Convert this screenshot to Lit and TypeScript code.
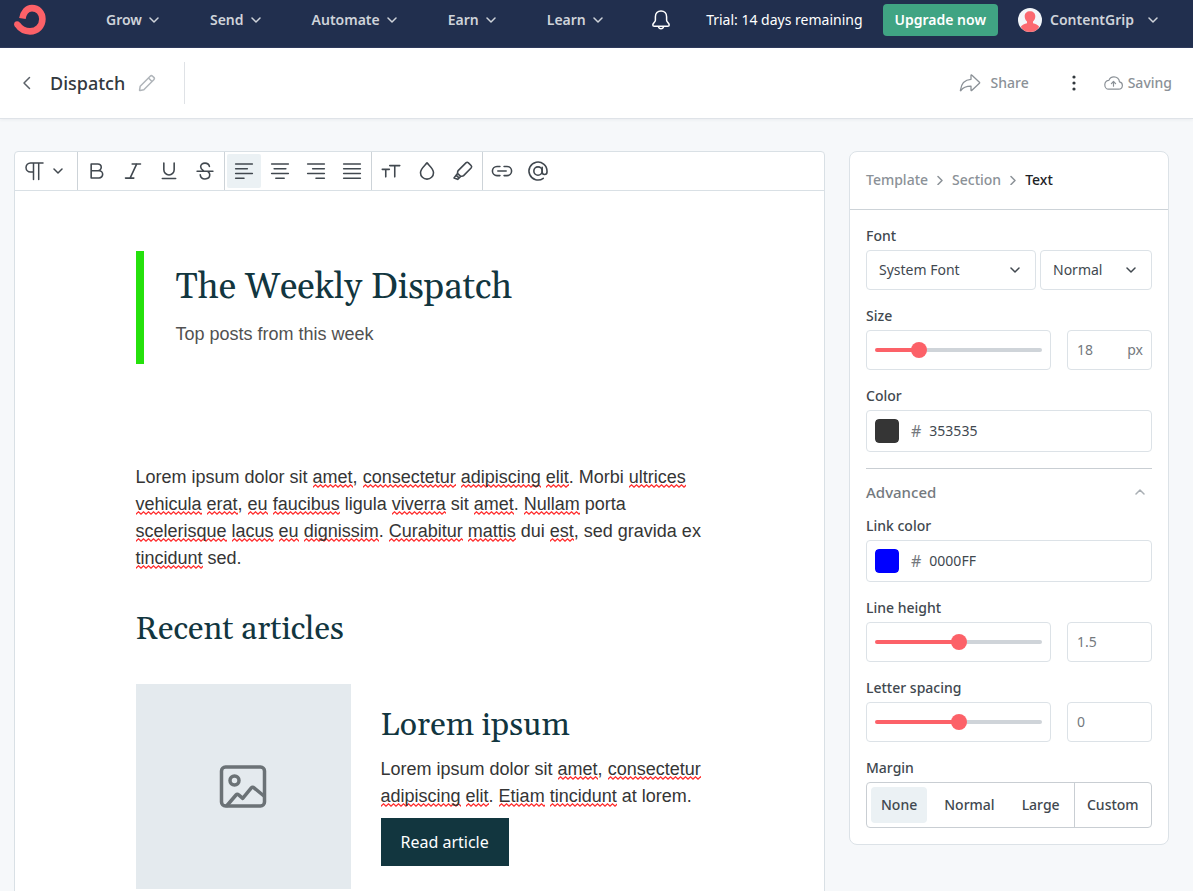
import { LitElement, html, css, svg, nothing } from "lit";
import { customElement, property, state } from "lit/decorators.js";
import { classMap } from "lit/directives/class-map.js";

const base = css`
  *,
  *::before,
  *::after {
    box-sizing: border-box;
  }
  button,
  input,
  select {
    font: inherit;
    color: inherit;
    margin: 0;
    padding: 0;
    border: 0;
    background: none;
  }
  button {
    cursor: pointer;
  }
  a {
    color: inherit;
    text-decoration: none;
  }
  svg {
    display: block;
    flex: none;
    fill: none;
    stroke: currentColor;
    stroke-linecap: round;
    stroke-linejoin: round;
  }
`;

const chevronDown = html`<svg width="10" height="6" viewBox="0 0 10 6" stroke-width="1.5" aria-hidden="true">
  <path d="M1 1l4 4 4-4" />
</svg>`;

@customElement("top-nav")
export class TopNav extends LitElement {
  static styles = [
    base,
    css`
      :host {
        display: block;
        flex: none;
      }
      .bar {
        display: flex;
        align-items: center;
        height: 48px;
        padding: 0 35px 8px 14px;
        background: #212f4e;
        border-bottom: 1px solid #2f3b5d;
        color: #fff;
        white-space: nowrap;
      }
      .logo {
        margin-right: 60px;
      }
      .menu {
        display: flex;
        gap: 51px;
      }
      .item {
        display: flex;
        align-items: center;
        gap: 7px;
        font-weight: 600;
        line-height: 20px;
        color: #cfd3da;
      }
      .side {
        display: flex;
        align-items: center;
        gap: 20px;
        margin-left: auto;
      }
      .bell {
        margin-right: 15px;
      }
      .upgrade {
        height: 32px;
        padding: 0 12px;
        border-radius: 4px;
        background: #40a483;
        font-weight: 600;
      }
      .account {
        display: flex;
        align-items: center;
        gap: 8px;
        font-weight: 600;
        color: #cfd3da;
      }
      .account .caret {
        margin-left: 6px;
      }
    `,
  ];

  render() {
    return html`
      <header class="bar">
        <a class="logo" href="#" aria-label="Home">
          <svg width="32" height="32" viewBox="0 0 32 32">
            <path
              d="M8.4 14.6C9.4 8.3 13 4.1 18 4.1c6 0 10.4 4.700 10.400 11 0 7-5.400 12.300-12.400 12.300-5.700 0-9.600-2.500-12.600-6.900"
              stroke="#fc6168"
              stroke-width="6.600"
              stroke-linecap="butt"
            />
            <circle cx="3.100" cy="20.200" r="3" fill="#fc6168" stroke="none" />
          </svg>
        </a>
        <nav class="menu">
          ${["Grow", "Send", "Automate", "Earn", "Learn"].map(
            (name) => html`<button class="item" type="button">${name} ${chevronDown}</button>`
          )}
        </nav>
        <div class="side">
          <button class="bell" type="button" aria-label="Notifications">
            <svg width="20" height="20" viewBox="0 0 20 20" stroke-width="1.5">
              <path
                d="M10 .9c-3.400 0-5.600 2.500-5.600 5.800v3.600c0 1.600-2.600 2.800-2.600 4.600 0 .9.700 1.300 1.500 1.300h13.400c.8 0 1.500-.4 1.500-1.300 0-1.800-2.600-3-2.600-4.600V6.700C15.600 3.400 13.400.9 10 .9z"
              />
              <path d="M7.600 17.200a2.500 2.200 0 0 0 4.800 0" />
            </svg>
          </button>
          <span>Trial: 14 days remaining</span>
          <button class="upgrade" type="button">Upgrade now</button>
          <button class="account" type="button">
            <svg width="24" height="24" viewBox="0 0 24 24" stroke="none">
              <clipPath id="face"><circle cx="12" cy="12" r="12" /></clipPath>
              <circle cx="12" cy="12" r="12" fill="#f3f6f9" stroke="none" />
              <g clip-path="url(#face)" fill="#fb6970" stroke="none">
                <path
                  d="M12 3.200c3.200 0 5.300 2 5.300 5 0 2.300-.9 4.200-2.300 5.400v1.600c2.500.7 5 1.500 6.200 3.600L17 25H7l-4.200-6.200c1.200-2.100 3.700-2.900 6.200-3.600v-1.600C7.600 12.400 6.700 10.500 6.700 8.200c0-3 2.100-5 5.300-5z"
                />
              </g>
            </svg>
            ContentGrip
            <span class="caret">${chevronDown}</span>
          </button>
        </div>
      </header>
    `;
  }
}

@customElement("title-bar")
export class TitleBar extends LitElement {
  static styles = [
    base,
    css`
      :host {
        display: block;
        flex: none;
        position: relative;
      }
      .bar {
        display: flex;
        align-items: center;
        height: 71px;
        padding: 0 21px 0 22px;
        background: #fff;
        border-bottom: 1px solid #dfe3e8;
        box-shadow: 0 1px 3px rgba(40, 50, 70, 0.06);
        font-weight: 500;
        color: #8b9197;
        white-space: nowrap;
      }
      .back {
        color: #5a6067;
      }
      .name {
        margin: 0 13px 0 18px;
        font-size: 18px;
        font-weight: 500;
        line-height: 24px;
        color: #33393e;
      }
      .edit {
        height: 42px;
        padding-right: 28px;
        border-right: 1px solid #dfe2e6;
        color: #b0b5ba;
      }
      .actions {
        display: flex;
        align-items: center;
        margin-left: auto;
      }
      .share {
        display: flex;
        align-items: center;
        gap: 10px;
      }
      .more {
        padding: 0 23px 0 38px;
        color: #33393e;
      }
      .more svg {
        fill: currentColor;
        stroke: none;
      }
      .status {
        display: flex;
        align-items: center;
        gap: 5px;
      }
    `,
  ];

  render() {
    return html`
      <div class="bar">
        <a class="back" href="#" aria-label="Back">
          <svg width="10" height="14" viewBox="0 0 10 14" stroke-width="1.500"><path d="M7.500 1.500L2 7l5.500 5.500" /></svg>
        </a>
        <h1 class="name">Dispatch</h1>
        <button class="edit" type="button" aria-label="Rename">
          <svg width="18" height="18" viewBox="0 0 18 18" stroke-width="1.500">
            <path
              d="M2.200 12.200L12.200 2.200a1.700 1.700 0 0 1 2.400 0l1.200 1.200a1.700 1.700 0 0 1 0 2.400L5.800 15.800l-3.700.7a.4.4 0 0 1-.5-.5zM10.800 4.300l2.900 2.900"
            />
          </svg>
        </button>
        <div class="actions">
          <button class="share" type="button">
            <svg width="22" height="18" viewBox="0 0 22 18" stroke-width="1.300">
              <path
                d="M12 1.300c0-.4.400-.6.700-.3l7.700 7.200c.3.300.3.700 0 1L12.700 16.500c-.3.300-.7.100-.7-.3v-4c-4.700 0-7.800 1-10 4.300-.3.400-.7.200-.6-.2C2.200 9.800 5.600 5.600 12 5.300z"
              />
            </svg>
            Share
          </button>
          <button class="more" type="button" aria-label="More options">
            <svg width="14" height="16" viewBox="0 0 14 16">
              <circle cx="7" cy="2" r="1.600" />
              <circle cx="7" cy="8" r="1.600" />
              <circle cx="7" cy="14" r="1.600" />
            </svg>
          </button>
          <span class="status">
            <svg width="19" height="14" viewBox="0 0 19 14" stroke-width="1.200">
              <path
                d="M4.600 13.200h10a3.700 3.700 0 0 0 .9-7.300C15.200 3 12.900.8 10 .8 7.500.8 5.600 2.200 4.900 4.400 2.500 4.400.8 6.300.8 8.700c0 2.500 1.700 4.500 3.800 4.500z"
              />
              <path d="M9.500 10.200V5.600M7.400 7.600l2.100-2.100 2.100 2.100" />
            </svg>
            Saving
          </span>
        </div>
      </div>
    `;
  }
}

const tools = [
  [
    { label: "Bold", art: svg`<path d="M5 3.500h8a4 4 0 0 1 0 8.200H5zM5 11.700h9.500a4.300 4.300 0 0 1 0 8.600H5z" />` },
    { label: "Italic", art: svg`<path d="M11 3.500h10M3 20.500h10M16.500 3.500L8.500 20.500" />` },
    { label: "Underline", art: svg`<path d="M5.800 2.500v8a6.200 6.200 0 0 0 12.400 0v-8M4 21h16" />` },
    {
      label: "Strikethrough",
      art: svg`<path d="M17.300 6.500c-.5-2.500-2.500-4-5.300-4-3 0-5.200 1.700-5.200 4.300 0 2.100 1.400 3.600 3.300 4.700M2.500 12.300h19M15.800 13c1.300.9 1.900 2.100 1.900 3.600 0 2.800-2.300 4.900-5.700 4.900-3.200 0-5.400-1.900-5.700-4.900" />`,
    },
  ],
  [
    { label: "Align left", art: svg`<path d="M2 3.500h20M2 9.300h14M2 15h20M2 20.700h10" />` },
    { label: "Align center", art: svg`<path d="M2 3.500h20M5 9.300h14M2 15h20M7 20.700h10" />` },
    { label: "Align right", art: svg`<path d="M2 3.500h20M8 9.300h14M2 15h20M12 20.700h10" />` },
    { label: "Justify", art: svg`<path d="M2 3.500h20M2 9.300h20M2 15h20M2 20.700h20" />` },
  ],
  [
    { label: "Text size", art: svg`<path d="M10.500 5.500h12M16.500 5.500V19M1.500 10h8.500M5.700 10V19" />` },
    { label: "Text color", art: svg`<path d="M12 2.200C9.200 5.600 4.200 9.400 4.200 14a7.800 7.800 0 0 0 15.600 0c0-4.600-5-8.400-7.800-11.800z" />` },
    {
      label: "Highlight",
      art: svg`<path d="M6.200 11.500l9.300-9.300a2.200 2.200 0 0 1 3 0l3.200 3.200a2.200 2.200 0 0 1 0 3L12.700 17.600c-1.100 1-2.200.5-3.500.8L5.400 14.900c.3-1.300-.2-2.400.8-3.400zM5.400 14.900l-4.200 5.400L5.600 22l3.600-3.600M3.800 17l3 3" />`,
    },
  ],
  [
    {
      label: "Link",
      art: svg`<path d="M9.500 6.500H6a5.500 5.500 0 0 0 0 11h3.500M14.500 6.500H18a5.500 5.500 0 0 1 0 11h-3.500M7 12h10" />`,
    },
    {
      label: "Personalize",
      art: svg`<circle cx="12" cy="12" r="5" /><path d="M17 7.500v5.800a2.900 2.900 0 0 0 5.800 0V12a10.800 10.800 0 1 0-4.500 8.800" />`,
    },
  ],
];

@customElement("format-toolbar")
export class FormatToolbar extends LitElement {
  @state() align = "Align left";

  static styles = [
    base,
    css`
      :host {
        display: block;
      }
      .bar {
        display: flex;
        height: 39px;
        border-bottom: 1px solid #d9e0e5;
        color: #41484f;
      }
      .group {
        display: flex;
        align-items: center;
        gap: 2px;
        padding: 0 2px;
        border-right: 1px solid #cdd3d8;
      }
      .group:last-child {
        border-right: 0;
      }
      .style {
        display: flex;
        align-items: center;
        gap: 9px;
        height: 34px;
        padding: 0 12px 0 7px;
      }
      .tool {
        display: grid;
        place-items: center;
        width: 34px;
        height: 34px;
        border-radius: 2px;
      }
      .tool svg {
        overflow: visible;
      }
      .on {
        background: #ebf1f4;
      }
    `,
  ];

  render() {
    return html`
      <div class="bar" role="toolbar" aria-label="Formatting">
        <div class="group">
          <button class="style" type="button" aria-label="Paragraph style">
            <svg width="20" height="20" viewBox="0 0 20 20" stroke-width="1.500">
              <path d="M19 2H6.500a4.500 4.500 0 0 0 0 9H9.500M9.500 2v16.500M14.700 2v16.500" />
            </svg>
            ${chevronDown}
          </button>
        </div>
        ${tools.map(
          (group) => html`
            <div class="group">
              ${group.map(
                (tool) => html`
                  <button
                    class=${classMap({ tool: true, on: tool.label === this.align })}
                    type="button"
                    aria-label=${tool.label}
                    @click=${() => this.pick(tool.label)}
                  >
                    <svg width="20" height="20" viewBox="0 0 24 24" stroke-width="1.900">${tool.art}</svg>
                  </button>
                `
              )}
            </div>
          `
        )}
      </div>
    `;
  }

  pick(label: string) {
    if (label.startsWith("Align") || label === "Justify") this.align = label;
  }
}

/* Words wrapped in underscores are the ones the spell checker flags. */
const spelled = (text: string) =>
  text.split("_").map((part, i) => (i % 2 ? html`<span class="typo">${part}</span>` : part));

@customElement("email-canvas")
export class EmailCanvas extends LitElement {
  static styles = [
    base,
    css`
      :host {
        display: block;
        border: 1px solid #d9e0e5;
        border-radius: 4px 4px 0 0;
        background: #fff;
      }
      .page {
        max-width: 600px;
        margin: 0 auto;
        padding: 60px 16px;
        font-family: "Liberation Sans", Arial, sans-serif;
        font-size: 18px;
        line-height: 27px;
        color: #353535;
      }
      h2,
      h3,
      p {
        margin: 0;
      }
      h2,
      h3 {
        font-family: Gelasio, Georgia, "Liberation Serif", serif;
        font-weight: 400;
        color: #12363f;
      }
      .masthead {
        padding: 12px 0 16px 32px;
        border-left: 8px solid #25e10c;
        color: #515151;
      }
      .masthead h2 {
        margin-bottom: 8px;
        font-size: 36px;
        line-height: 50px;
      }
      .intro {
        margin: 100px 0 34px;
      }
      .section {
        margin-bottom: 30px;
        font-size: 32px;
        line-height: 48px;
      }
      .card {
        display: grid;
        grid-template-columns: 215px 1fr;
        align-items: start;
        gap: 30px;
      }
      .thumb {
        display: grid;
        place-items: center;
        height: 205px;
        background: #e4eaee;
        color: #6b7276;
      }
      .text {
        padding-top: 18px;
      }
      .text h3 {
        margin-bottom: 6px;
        font-size: 32px;
        line-height: 48px;
      }
      .read {
        display: inline-block;
        margin-top: 8px;
        padding: 12px 20px;
        background: #12363f;
        color: #fff;
        font-family: "Noto Sans", sans-serif;
        font-size: 16px;
        line-height: 24px;
      }
      .typo {
        padding-bottom: 1px;
        background: url("data:image/svg+xml,%3Csvg xmlns='http://www.w3.org/2000/svg' width='5' height='4' viewBox='0 0 5 4'%3E%3Cpath d='M-1.250 1.900L0 3.200 2.500 .8 5 3.200 6.250 1.900' fill='none' stroke='%23ff2a2a' stroke-width='1.200'/%3E%3C/svg%3E")
          left bottom repeat-x;
      }
    `,
  ];

  render() {
    return html`
      <format-toolbar></format-toolbar>
      <article class="page">
        <header class="masthead">
          <h2>The Weekly Dispatch</h2>
          <p>Top posts from this week</p>
        </header>
        <p class="intro">
          ${spelled(
            "Lorem ipsum dolor sit _amet_, _consectetur_ _adipiscing_ _elit_. Morbi _ultrices_ _vehicula_ _erat_, _eu_ _faucibus_ ligula _viverra_ sit _amet_. _Nullam_ porta _scelerisque_ _lacus_ _eu_ _dignissim_. _Curabitur_ _mattis_ dui _est_, sed gravida ex _tincidunt_ sed."
          )}
        </p>
        <h2 class="section">Recent articles</h2>
        <section class="card">
          <div class="thumb">
            <svg width="48" height="48" viewBox="0 0 48 48" stroke-width="3.500">
              <rect x="2.500" y="4" width="43" height="39" rx="4" />
              <circle cx="15.500" cy="17.500" r="4.500" />
              <path d="M8 42.500L17 32c.8-.9 1.800-.9 2.700-.1l4 3.400 8.600-10.400c.8-.9 1.900-1 2.700-.1l10 8.200" />
            </svg>
          </div>
          <div class="text">
            <h3>Lorem ipsum</h3>
            <p>
              ${spelled(
                "Lorem ipsum dolor sit _amet_, _consectetur_ _adipiscing_ _elit_. _Etiam_ _tincidunt_ at lorem."
              )}
            </p>
            <a class="read" href="#">Read article</a>
          </div>
        </section>
      </article>
    `;
  }
}

@customElement("style-panel")
export class StylePanel extends LitElement {
  @property() margin = "None";

  @state() values: Record<string, number> = { size: 18, leading: 1.5, tracking: 0 };

  static styles = [
    base,
    css`
      :host {
        display: block;
        border: 1px solid #dce2e7;
        border-radius: 8px;
        background: #fff;
        line-height: 20px;
        color: #41484f;
      }
      .crumbs {
        display: flex;
        align-items: center;
        gap: 9px;
        height: 58px;
        padding: 0 16px 2px;
        border-bottom: 1px solid #cdd3d8;
        font-weight: 500;
        color: #8b9197;
      }
      .here {
        color: #1c2226;
      }
      .fields {
        display: grid;
        gap: 16px;
        padding: 16px;
      }
      .field {
        display: grid;
        gap: 4px;
        min-width: 0;
        margin: 0;
        padding: 0;
        border: 0;
      }
      .label {
        font-weight: 500;
        padding: 0;
      }
      legend.label {
        margin-bottom: 4px;
      }
      .row {
        display: grid;
        grid-template-columns: 1fr 85px;
        gap: 16px;
      }
      .fonts {
        grid-template-columns: 170px 1fr;
        gap: 4px;
      }
      .box {
        display: flex;
        align-items: center;
        height: 40px;
        padding: 0 8px;
        border: 1px solid #dce2e7;
        border-radius: 4px;
      }
      .pick {
        display: grid;
        align-items: center;
        height: 40px;
        border: 1px solid #dce2e7;
        border-radius: 4px;
      }
      .pick select,
      .pick svg {
        grid-area: 1 / 1;
      }
      .pick select {
        height: 38px;
        padding: 0 12px;
        appearance: none;
      }
      .pick svg {
        justify-self: end;
        margin-right: 15px;
        pointer-events: none;
      }
      .slider {
        width: 100%;
        height: 4px;
        border-radius: 2px;
        appearance: none;
        background: linear-gradient(#fc6168, #fc6168) 0 0 / var(--fill) 100% no-repeat #cfd4d9;
      }
      .slider::-webkit-slider-thumb {
        appearance: none;
        width: 16px;
        height: 16px;
        border-radius: 50%;
        background: #fc6168;
      }
      .number {
        flex: 1;
        min-width: 0;
        padding-left: 1px;
        color: #74797e;
      }
      .unit {
        color: #74797e;
      }
      .color {
        height: 42px;
      }
      .swatch {
        width: 24px;
        height: 24px;
        margin-right: 12px;
        border-radius: 4px;
        overflow: hidden;
        appearance: none;
      }
      .swatch::-webkit-color-swatch-wrapper {
        padding: 0;
      }
      .swatch::-webkit-color-swatch {
        border: 0;
        border-radius: 4px;
      }
      .hash {
        margin-right: 8px;
        font-size: 16px;
        color: #74797e;
      }
      .hex {
        flex: 1;
        min-width: 0;
      }
      .advanced {
        display: grid;
        border-top: 1px solid #c9ced3;
      }
      .toggle {
        display: flex;
        align-items: center;
        justify-content: space-between;
        height: 47px;
        padding: 0 7px 2px 0;
        font-size: 15px;
        font-weight: 500;
        color: #74797e;
      }
      .toggle svg {
        color: #a9afb4;
      }
      .segments {
        display: flex;
        height: 46px;
        border: 1px solid #c9ced3;
        border-radius: 4px;
        font-weight: 500;
      }
      .presets {
        display: flex;
        flex: none;
        gap: 7px;
        padding: 4px;
        border-right: 1px solid #c9ced3;
      }
      .option {
        display: grid;
        place-items: center;
        padding: 0 10px;
        border-radius: 4px;
      }
      .option input {
        grid-area: 1 / 1;
        width: 1px;
        height: 1px;
        appearance: none;
      }
      .option span {
        grid-area: 1 / 1;
      }
      .on {
        background: #ebf1f4;
      }
      .custom {
        flex: 1;
        padding: 0;
      }
    `,
  ];

  slider(id: string, label: string, min: number, max: number, step: number, unit = "") {
    const value = this.values[id];
    const fill = `--fill: ${((value - min) / (max - min)) * 100}%`;
    return html`
      <div class="field">
        <label class="label" for=${id}>${label}</label>
        <div class="row">
          <div class="box">
            <input
              class="slider"
              id=${id}
              type="range"
              min=${min}
              max=${max}
              step=${step}
              style=${fill}
              .value=${String(value)}
              @input=${(e: Event) => this.set(id, e)}
            />
          </div>
          <div class="box">
            <input
              class="number"
              type="text"
              inputmode="decimal"
              aria-label="${label} value"
              .value=${String(value)}
              @change=${(e: Event) => this.set(id, e)}
            />
            ${unit ? html`<span class="unit">${unit}</span>` : nothing}
          </div>
        </div>
      </div>
    `;
  }

  set(id: string, e: Event) {
    this.values = { ...this.values, [id]: Number((e.target as HTMLInputElement).value) };
  }

  color(id: string, label: string, hex: string) {
    return html`
      <div class="field">
        <label class="label" for=${id}>${label}</label>
        <div class="box color">
          <input class="swatch" type="color" aria-label="${label} swatch" value="#${hex.toLowerCase()}" />
          <span class="hash">#</span>
          <input class="hex" id=${id} type="text" value=${hex} />
        </div>
      </div>
    `;
  }

  option(name: string, extra = "") {
    const on = this.margin === name;
    return html`
      <label class="option ${extra} ${on ? "on" : ""}">
        <input type="radio" name="margin" .checked=${on} @change=${() => (this.margin = name)} />
        <span>${name}</span>
      </label>
    `;
  }

  render() {
    const arrow = html`<svg width="6" height="10" viewBox="0 0 6 10" stroke-width="1.500" aria-hidden="true">
      <path d="M1 1.500L5 5.500 1 9.500" />
    </svg>`;
    return html`
      <nav class="crumbs" aria-label="Selection">
        <a href="#">Template</a>${arrow}<a href="#">Section</a>${arrow}<span class="here">Text</span>
      </nav>
      <div class="fields">
        <div class="field">
          <label class="label" for="family">Font</label>
          <div class="row fonts">
            <div class="pick">
              <select id="family">
                <option>System Font</option>
              </select>
              ${chevronDown}
            </div>
            <div class="pick">
              <select aria-label="Font weight">
                <option>Normal</option>
              </select>
              ${chevronDown}
            </div>
          </div>
        </div>
        ${this.slider("size", "Size", 12, 37, 1, "px")} ${this.color("text-color", "Color", "353535")}
        <div class="advanced">
          <button class="toggle" type="button" aria-expanded="true">
            Advanced
            <svg width="10" height="6" viewBox="0 0 10 6" stroke-width="1.500"><path d="M1 5l4-4 4 4" /></svg>
          </button>
          ${this.color("link-color", "Link color", "0000FF")}
        </div>
        ${this.slider("leading", "Line height", 1, 2, 0.1)} ${this.slider("tracking", "Letter spacing", -5, 5, 1)}
        <fieldset class="field">
          <legend class="label">Margin</legend>
          <div class="segments">
            <div class="presets">${["None", "Normal", "Large"].map((name) => this.option(name))}</div>
            ${this.option("Custom", "custom")}
          </div>
        </fieldset>
      </div>
    `;
  }
}

@customElement("app-root")
export class AppRoot extends LitElement {
  static styles = [
    base,
    css`
      :host {
        display: flex;
        flex-direction: column;
        height: 100vh;
        background: #f6f8fa;
        font-family: "Noto Sans", sans-serif;
        font-size: 14px;
        line-height: 20px;
      }
      .work {
        display: grid;
        grid-template-columns: minmax(0, 1fr) 320px;
        align-items: start;
        gap: 24px;
        flex: 1;
        min-height: 0;
        padding: 32px 24px 0 14px;
        overflow: auto;
        scrollbar-width: none;
      }
    `,
  ];

  render() {
    return html`
      <top-nav></top-nav>
      <title-bar></title-bar>
      <main class="work">
        <email-canvas></email-canvas>
        <style-panel></style-panel>
      </main>
    `;
  }
}
